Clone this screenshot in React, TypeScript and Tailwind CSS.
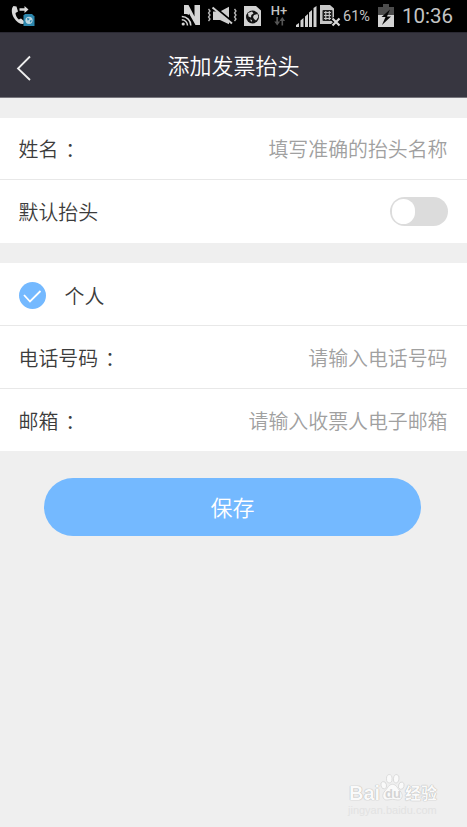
import { useState } from "react"
import type { ReactNode } from "react"
import clsx from "clsx"

// ─── status bar ──────────────────────────────────────────────────────────────

function CallForwardIcon() {
  return (
    <svg width="24" height="22" viewBox="0 0 24 22" className="shrink-0">
      <path
        d="M2.500 1C.2 3 .2 8.500 3 13c2.500 4 6.500 6.500 9.500 6l1-2.500-3.500-3-2.200 1C5.500 12.500 4.500 10 4.500 8L7 6.500 5.500 1.500z"
        fill="#d9d9d9"
      />
      <path d="M8.500 3.200h5V1l4 3.500-4 3.500V5.800h-5z" fill="#d9d9d9" />
      <path d="M14 9h7l2.500 2.500V21H12.500V10.500z" fill="#2b86ad" />
      <circle cx="18" cy="15.300" r="3.600" fill="#b9d5e0" />
      <path d="M16 13l2.500.5-.5 1.500-1.500.5zM19 15.500l1.800-.5-.8 2.500-1.200-.5z" fill="#2b86ad" />
    </svg>
  )
}

function NfcIcon() {
  return (
    <svg width="20" height="23" viewBox="0 0 20 23" className="shrink-0">
      <path d="M3 10V1h4.500l6 11.500V1H19v20h-4.500L8 9.500V11C6.500 10 5 9.800 3 10z" fill="#d6d6d6" />
      <g fill="none" stroke="#d6d6d6" strokeWidth="1.500">
        <path d="M.8 12.500a9 9 0 0 1 9 9" />
        <path d="M.8 15.800a5.700 5.700 0 0 1 5.700 5.700" />
      </g>
      <circle cx="2.200" cy="20" r="1.600" fill="#d6d6d6" />
    </svg>
  )
}

function VibrateMutedIcon() {
  return (
    <svg width="31" height="20" viewBox="0 0 31 20" className="shrink-0">
      <g fill="none" stroke="#b8b8b8" strokeWidth="1.300">
        <path d="M1.500 3l1.500 2-1.500 2L3 9l-1.500 2L3 13l-1.500 2" />
        <path d="M27.500 3L29 5l-1.500 2 1.500 2-1.500 2 1.500 2-1.500 2" />
      </g>
      <path d="M6 5.500h7L22 .8v17.500L13 14H6z" fill="#d0d0d0" />
      <path d="M6.500 .5l20 16.500" stroke="#000" strokeWidth="2.500" />
      <path d="M5.500 1.500l19.500 16" stroke="#d0d0d0" strokeWidth="2" />
    </svg>
  )
}

function GlobeCardIcon() {
  return (
    <svg width="17" height="21" viewBox="0 0 17 21" className="shrink-0">
      <path d="M0 0h12l5 4.500V20H0z" fill="#d2d2d2" />
      <circle cx="8.500" cy="11" r="6.500" fill="#111" />
      <path d="M4 7l4-1.500 1.500 2L7.300 9 7 11.500l-2.500-1zM10 9l3.500-1 .8 3-2.300 3.500-2-1.500-1-2zM6 13.500l2 .5-.5 2z" fill="#d2d2d2" />
    </svg>
  )
}

function DataArrowsIcon() {
  return (
    <svg width="13" height="9" viewBox="0 0 13 9">
      <path d="M3.300 0h1.800v4.500h2L4.200 8.500 1.300 4.500h2zM8.500 8.500V4h-2L9.300 0l2.800 4h-2v4.500z" fill="#555" />
    </svg>
  )
}

function SignalIcon() {
  return (
    <svg width="21" height="21" viewBox="0 0 21 21" className="shrink-0">
      <path
        d="M0 21v-2l3-2v4zM4.500 21v-6.500l3-2.500v9zM9 21V10.500L12 8v13zM13 21V6.500L16 4v17zM17.500 21V2l3-2v21z"
        fill="#d2d2d2"
      />
    </svg>
  )
}

function SimErrorIcon() {
  return (
    <svg width="21" height="22" viewBox="0 0 21 22" className="shrink-0">
      <path d="M0 0h10l4 3.500V19H0z" fill="#c8c8c8" />
      <rect x="2.500" y="5" width="10" height="11" rx="1" fill="#222" />
      <path d="M4 7.500h7M4 10.500h7M4 13.500h7M5.800 6v9M9.300 6v9" stroke="#c8c8c8" strokeWidth="1.100" />
      <path d="M12 13.500l7 7M19.500 13.500L12 21" stroke="#000" strokeWidth="4" />
      <path d="M12.500 13.500l7 7M19.500 13.500l-7 7" stroke="#d8d8d8" strokeWidth="2.200" />
    </svg>
  )
}

function BatteryIcon() {
  return (
    <svg width="16" height="24" viewBox="0 0 16 24" className="shrink-0">
      <path d="M5 0h6v3h5v9H0V3h5z" fill="#4c4c4c" />
      <path d="M0 11h16v12H0z" fill="#d4d4d4" />
      <path d="M12 5.500L3.500 13h4L4 21l9-8.500H9z" fill="#050505" />
    </svg>
  )
}

function StatusBar() {
  return (
    <div className="flex h-[33px] items-start border-b border-[#2a2933] bg-black font-['Roboto',sans-serif] font-normal text-[#c4c4c4]">
      <div className="pt-[5px] pl-[11px]">
        <CallForwardIcon />
      </div>
      <div className="ml-auto flex items-start pr-[13px]">
        <div className="pt-[4px]">
          <NfcIcon />
        </div>
        <div className="ml-[6px] pt-[6px]">
          <VibrateMutedIcon />
        </div>
        <div className="ml-[6px] pt-[6px]">
          <GlobeCardIcon />
        </div>
        <div className="ml-[9px] flex w-[18px] flex-col items-center pt-[4px]">
          <span className="text-[13px] leading-[13px] font-medium">H+</span>
          <DataArrowsIcon />
        </div>
        <div className="ml-[8px] pt-[6px]">
          <SignalIcon />
        </div>
        <div className="ml-[3px] pt-[5px]">
          <SimErrorIcon />
        </div>
        <span className="ml-[2px] w-[29px] pt-[9px] text-[14.500px] leading-[16px] whitespace-nowrap">61%</span>
        <div className="ml-[6px] pt-[4px]">
          <BatteryIcon />
        </div>
        <span className="ml-[8px] w-[52px] pt-[5px] text-[20.500px] leading-[23px]">10:36</span>
      </div>
    </div>
  )
}

// ─── form pieces ─────────────────────────────────────────────────────────────

function Row({ className, children }: { className?: string; children: ReactNode }) {
  return <div className={clsx("flex items-center bg-white pr-[19.500px] pl-[18.500px]", className)}>{children}</div>
}

function FieldLabel({ text }: { text: string }) {
  return (
    <label className="flex text-[#3c3c3c]">
      {text}
      <span className="ml-[7px]">：</span>
    </label>
  )
}

function Toggle({ on, onChange }: { on: boolean; onChange: () => void }) {
  return (
    <button
      role="switch"
      aria-checked={on}
      onClick={onChange}
      className={clsx(
        "ml-auto flex h-[29px] w-[58px] items-center rounded-full px-[2px]",
        on ? "justify-end bg-[#74b9ff]" : "bg-[#dcdcdc]"
      )}
    >
      <span className="h-[25px] w-[23px] rounded-full bg-white" />
    </button>
  )
}

function Watermark() {
  return (
    <div className="flex w-[92px] flex-col font-['Liberation_Sans',sans-serif] text-[#fafafa]">
      <div className="flex h-[32px] items-end [text-shadow:0_0_1px_#aaa,0_0_1px_#bbb]">
        <span className="ml-[1px] w-[31px] text-[20px] leading-[22px] font-bold">Bai</span>
        <div className="relative h-[32px] w-[25px]">
          <svg width="25" height="32" viewBox="0 0 27 32" fill="#fafafa" stroke="#d4d4d4" strokeWidth=".8">
            <ellipse cx="4" cy="13" rx="3" ry="4" transform="rotate(-15 4 13)" />
            <ellipse cx="10" cy="6" rx="3" ry="4.500" />
            <ellipse cx="17.500" cy="6" rx="3" ry="4.500" transform="rotate(10 17.500 6)" />
            <ellipse cx="23" cy="13.500" rx="3" ry="4" transform="rotate(15 23 13.500)" />
            <path d="M13.500 12c4 0 5 4 8 7 4 4 3 10-2 10-2 0-4-.8-6-.8s-4 .8-6 .8c-5 0-6-6-2-10 3-3 4-7 8-7z" />
          </svg>
          <span className="absolute top-[15px] left-[5px] text-[13px] leading-[13px] font-bold text-[#d4d4d4] [text-shadow:none]">
            du
          </span>
        </div>
        <span className="font-['Noto_Sans_CJK_SC',sans-serif] text-[16px] leading-[24px] font-bold">经验</span>
      </div>
      <span className="text-[11px] leading-[12px] whitespace-nowrap text-[#e2e2e2]">jingyan.baidu.com</span>
    </div>
  )
}

// ─── page ────────────────────────────────────────────────────────────────────

export default function App() {
  const [isDefault, setIsDefault] = useState(false)

  return (
    <div className="flex h-[827px] w-[467px] flex-col overflow-hidden bg-[#efefef] font-['Noto_Sans_CJK_SC',sans-serif] text-[19.900px] leading-[30px] font-[350]">
      <StatusBar />

      <header className="grid h-[65px] grid-cols-[1fr_auto_1fr] items-center border-b border-[#77767d] bg-[#373640] text-white">
        <button aria-label="返回" className="mt-[6px] ml-[16px] w-[16px]">
          <svg width="16" height="26" viewBox="0 0 16 26" fill="none" stroke="#eee" strokeWidth="1.800">
            <path d="M14 1.500L2 13.500l12 11.500" />
          </svg>
        </button>
        <h1 className="pb-[2px] text-[22px]">添加发票抬头</h1>
      </header>

      <section className="mt-[20px]">
        <Row className="h-[62px] border-b border-[#e8e8e8] pt-[1px]">
          <FieldLabel text="姓名" />
          <span className="ml-auto text-[#a0a0a0]">填写准确的抬头名称</span>
        </Row>
        <Row className="h-[63px]">
          <span className="text-[#3c3c3c]">默认抬头</span>
          <Toggle on={isDefault} onChange={() => setIsDefault((v) => !v)} />
        </Row>
      </section>

      <section className="mt-[20px]">
        <Row className="h-[63px] border-b border-[#e8e8e8] pt-[3px]">
          <span className="flex size-[27px] items-center justify-center rounded-full bg-[#74b9ff]">
            <svg width="20" height="16" viewBox="0 0 20 16" fill="none" stroke="#fff" strokeWidth="1.800">
              <path d="M2 7l6 6.500L18.500 3" />
            </svg>
          </span>
          <span className="ml-[19px] text-[#3c3c3c]">个人</span>
        </Row>
        <Row className="h-[63px] border-b border-[#e8e8e8] pt-[2px]">
          <FieldLabel text="电话号码" />
          <span className="ml-auto text-[#a0a0a0]">请输入电话号码</span>
        </Row>
        <Row className="h-[62px] pt-[2px]">
          <FieldLabel text="邮箱" />
          <span className="ml-auto text-[#a0a0a0]">请输入收票人电子邮箱</span>
        </Row>
      </section>

      <button className="mt-[27px] mr-[46px] ml-[44px] h-[58px] rounded-full bg-[#74b9ff] pb-[2px] text-[22px] text-white">
        保存
      </button>

      <div className="mt-auto mr-[27px] mb-[11px] self-end">
        <Watermark />
      </div>
    </div>
  )
}
